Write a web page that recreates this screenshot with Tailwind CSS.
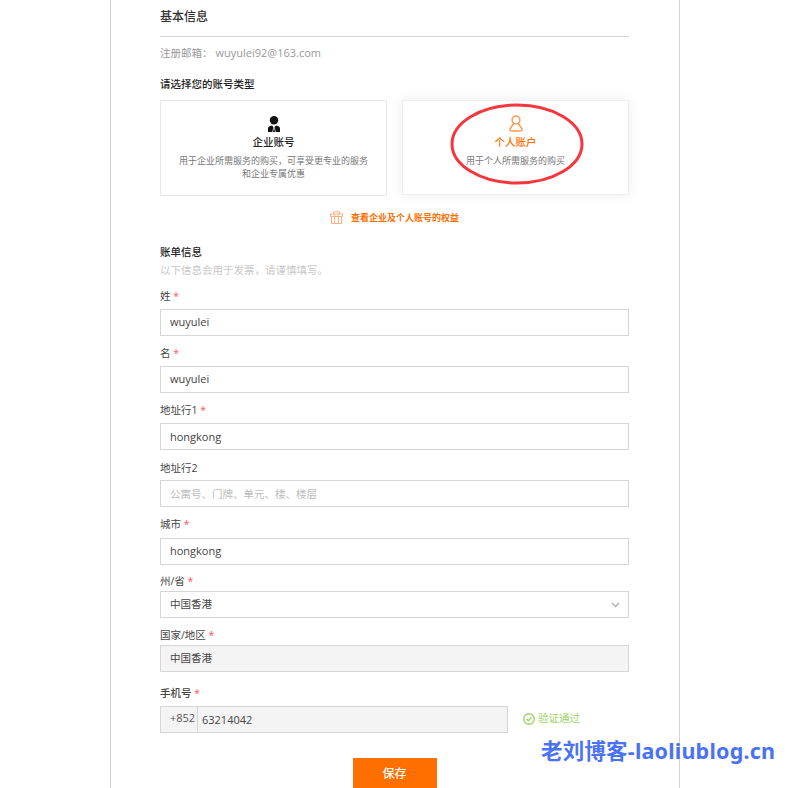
<!DOCTYPE html>
<html lang="zh">
<head>
<meta charset="utf-8">
<script src="https://cdn.jsdelivr.net/npm/@tailwindcss/browser@4"></script>
</head>
<body class="bg-white">
<div class="relative w-[800px] h-[788px] overflow-hidden bg-white font-['Open_Sans','Noto_Sans_CJK_SC',sans-serif] text-[10.5px] text-[#333]">
  <div class="ml-[110px] w-[570px] h-[788px] border-x border-[#d4d4d4] pl-[49px] pr-[50px]">
    <div class="w-[469px]">
      <div class="h-[37px] border-b border-[#d2d2d2] pt-[9px] text-[12px] leading-4 font-medium text-[#333]">基本信息</div>
      <div class="mt-[9px] h-[14px] leading-[14px] text-[#999]">注册邮箱：<span class="ml-[3px] text-[11px]">wuyulei92@163.com</span></div>
      <div class="mt-[17px] h-[14px] leading-[14px] font-medium text-[#222]">请选择您的账号类型</div>
      <div class="mt-[9px] flex justify-between">
        <div class="w-[227px] h-[96px] border border-[#e8e8e8] flex flex-col items-center pt-[15px]">
          <svg class="w-[14px] h-[16px]" viewBox="0 0 14 16"><circle cx="7" cy="4.3" r="4.2" fill="#111"/><path d="M1 16 L1 12.5 Q1 10 5 9.5 L6.4 11 L5.3 16Z M13 16 L13 12.5 Q13 10 9 9.5 L7.6 11 L8.7 16Z" fill="#111"/><path d="M7 11 L8 16 H6Z" fill="#111"/></svg>
          <div class="mt-[2px] h-[16px] leading-[16px] font-medium text-[#222]">企业账号</div>
          <div class="mt-[4px] text-[9px] leading-[13px] text-[#777] text-center">用于企业所需服务的购买，可享受更专业的服务<br>和企业专属优惠</div>
        </div>
        <div class="w-[227px] h-[95px] border border-[#efefef] shadow-[0_0_12px_rgba(0,0,0,0.08)] flex flex-col items-center pt-[14px]">
          <svg class="w-[14px] h-[17px]" viewBox="0 0 14 17" fill="none" stroke="#ff9a56" stroke-width="1.5"><circle cx="7" cy="5" r="3.9"/><path d="M4.6 8.5 L1 14 Q0.8 16 2.5 16 H11.5 Q13.2 16 13 14 L9.4 8.5"/></svg>
          <div class="mt-[2px] h-[16px] leading-[16px] font-medium text-[#ff6f00]">个人账户</div>
          <div class="mt-[4px] text-[9px] leading-[13px] text-[#777]">用于个人所需服务的购买</div>
        </div>
      </div>
      <div class="mt-[14px] h-[16px] flex items-center justify-center">
        <svg class="w-[13px] h-[13px] mb-[2px]" viewBox="0 0 13 13" fill="none" stroke="#ffb283" stroke-width="1"><rect x="0.5" y="3" width="12" height="2.5"/><rect x="1.5" y="5.5" width="10" height="7"/><path d="M4.7 3 V12.5 M8.3 3 V12.5 M3.5 3 V0.8 H9.5 V3"/></svg>
        <span class="ml-[8px] text-[9px] leading-4 font-bold text-[#ff6f00]">查看企业及个人账号的权益</span>
      </div>
      <div class="mt-[18px] h-[16px] leading-[16px] font-medium text-[#222]">账单信息</div>
      <div class="mt-[3px] h-[14px] leading-[14px] text-[#c8c8c8]">以下信息会用于发票，请谨慎填写。</div>

      <div class="mt-[13px] h-[13px] leading-[13px] text-[#444]">姓 <span class="text-[#f55]">*</span></div>
      <div class="mt-[6px] h-[27px] border border-[#d6d6d6] px-[9px] leading-[24px] text-[#444] text-[11px]">wuyulei</div>

      <div class="mt-[11px] h-[13px] leading-[13px] text-[#444]">名 <span class="text-[#f55]">*</span></div>
      <div class="mt-[6px] h-[27px] border border-[#d6d6d6] px-[9px] leading-[24px] text-[#444] text-[11px]">wuyulei</div>

      <div class="mt-[11px] h-[13px] leading-[13px] text-[#444]">地址行1 <span class="text-[#f55]">*</span></div>
      <div class="mt-[6px] h-[27px] border border-[#d6d6d6] px-[9px] leading-[25px] text-[#444] text-[11px]">hongkong</div>

      <div class="mt-[12px] h-[13px] leading-[13px] text-[#444]">地址行2</div>
      <div class="mt-[5px] h-[27px] border border-[#d6d6d6] px-[9px] leading-[26px] text-[#bbb]">公寓号、门牌、单元、楼、楼层</div>

      <div class="mt-[11px] h-[13px] leading-[13px] text-[#444]">城市 <span class="text-[#f55]">*</span></div>
      <div class="mt-[7px] h-[27px] border border-[#d6d6d6] px-[9px] leading-[24px] text-[#444] text-[11px]">hongkong</div>

      <div class="mt-[10px] h-[13px] leading-[13px] text-[#444]">州/省 <span class="text-[#f55]">*</span></div>
      <div class="mt-[3px] h-[27px] border border-[#d6d6d6] px-[9px] leading-[25px] text-[#444] flex justify-between items-center">
        <span>中国香港</span>
        <svg class="w-[9px] h-[6px] mr-[-1px]" viewBox="0 0 9 6" fill="none" stroke="#aaa" stroke-width="1.3"><path d="M1 1 L4.5 4.6 L8 1"/></svg>
      </div>

      <div class="mt-[11px] h-[13px] leading-[13px] text-[#444]">国家/地区 <span class="text-[#f55]">*</span></div>
      <div class="mt-[3px] h-[27px] border border-[#d6d6d6] bg-[#f4f4f4] px-[9px] leading-[25px] text-[#444]">中国香港</div>

      <div class="mt-[15px] h-[13px] leading-[13px] font-medium text-[#444]">手机号 <span class="text-[#f55]">*</span></div>
      <div class="mt-[6px] flex items-center">
        <div class="w-[348px] h-[27px] border border-[#d6d6d6] bg-[#f4f4f4] flex text-[#444]">
          <div class="w-[37px] border-r border-[#d6d6d6] pl-[9px] leading-[22px] text-[#555] text-[11px]">+852</div>
          <div class="pl-[4px] leading-[25px] text-[11px]">63214042</div>
        </div>
        <svg class="ml-[15px] w-[12px] h-[12px] mb-[2px]" viewBox="0 0 12 12" fill="none" stroke="#9ed36a" stroke-width="1.4"><circle cx="6" cy="6" r="5.2"/><path d="M3.6 6 L5.4 7.8 L8.4 4.4"/></svg>
        <span class="ml-[3px] mb-[2px] text-[#9ed36a]">验证通过</span>
      </div>
      <div class="mt-[25px] mx-auto w-[84px] h-[32px] bg-[#ff6f00] text-white text-center text-[12px] leading-[32px] font-medium">保存</div>
    </div>
  </div>
  <svg class="absolute left-[448px] top-[101px] w-[138px] h-[86px]" viewBox="0 0 138 86" fill="none"><ellipse cx="69" cy="43" rx="65" ry="39" stroke="#f5363c" stroke-width="3"/></svg>
  <div class="absolute left-[541px] top-[737px] h-[28px] leading-[28px] text-[21.5px] tracking-[0.2px] font-bold text-[#4a72f5] whitespace-nowrap font-['Noto_Sans','Noto_Sans_CJK_SC',sans-serif]">老刘博客-laoliublog.cn</div>
</div>
</body>
</html>
